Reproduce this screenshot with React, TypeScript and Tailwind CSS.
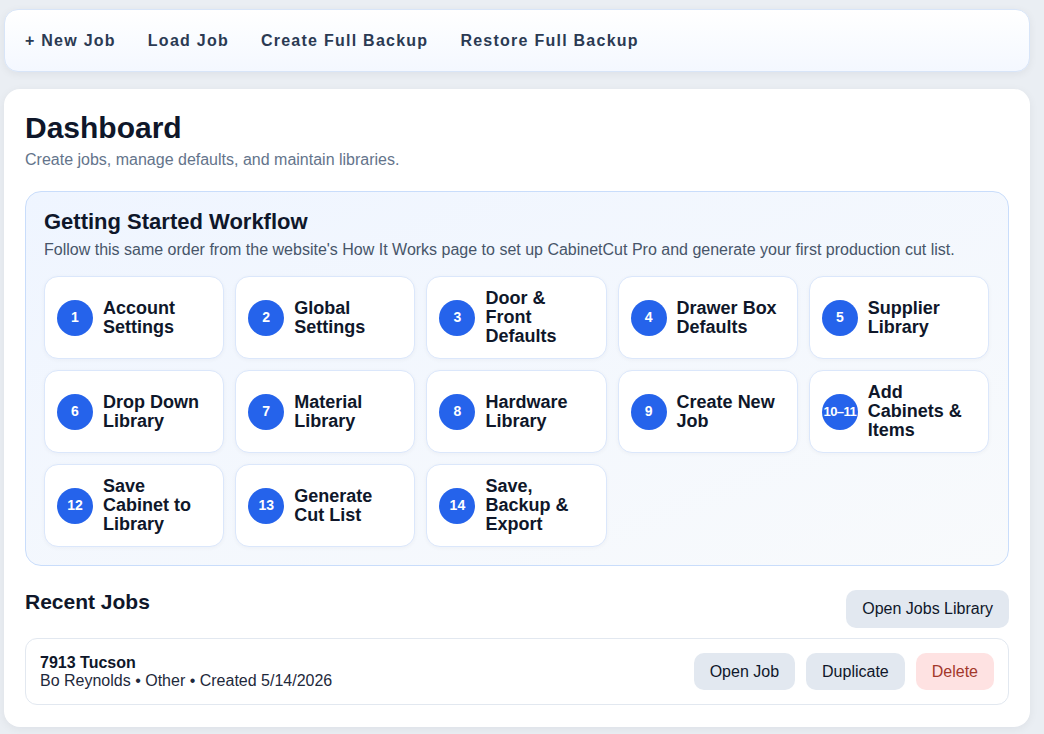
import React from 'react';

const navItems = ['+ New Job', 'Load Job', 'Create Full Backup', 'Restore Full Backup'];

const steps = [
  { n: '1', label: 'Account Settings' },
  { n: '2', label: 'Global Settings' },
  { n: '3', label: 'Door & Front Defaults' },
  { n: '4', label: 'Drawer Box Defaults' },
  { n: '5', label: 'Supplier Library' },
  { n: '6', label: 'Drop Down Library' },
  { n: '7', label: 'Material Library' },
  { n: '8', label: 'Hardware Library' },
  { n: '9', label: 'Create New Job' },
  { n: '10–11', label: 'Add Cabinets & Items' },
  { n: '12', label: 'Save Cabinet to Library' },
  { n: '13', label: 'Generate Cut List' },
  { n: '14', label: 'Save, Backup & Export' },
];

export default function App() {
  return (
    <div className="min-h-[734px] bg-[#eaeef3] pl-[4px] pr-[14px] pt-[9px] pb-[6px] font-['Liberation_Sans',Arial,sans-serif]">
      {/* Top bar */}
      <div className="h-[63px] flex items-center gap-8 pl-[20px] rounded-[14px] border border-[#d8e5f8] bg-gradient-to-b from-white to-[#f4f8ff] shadow-[0_2px_8px_rgba(15,23,42,0.06)]">
        {navItems.map((item) => (
          <span key={item} className="text-base leading-5 font-bold tracking-[1.25px] text-[#2b3a53]">
            {item}
          </span>
        ))}
      </div>

      {/* Main card */}
      <div className="mt-[17px] rounded-[16px] bg-white px-[21px] pt-[21px] pb-[22px] shadow-[0_2px_10px_rgba(15,23,42,0.06)]">
        <h1 className="text-[30px] leading-[36px] font-bold text-[#0f172a]">Dashboard</h1>
        <p className="mt-[4px] text-base leading-5 text-[#64748b]">
          Create jobs, manage defaults, and maintain libraries.
        </p>

        {/* Workflow */}
        <div className="mt-[21px] rounded-[16px] border border-[#c9ddfb] bg-gradient-to-br from-[#eff5ff] to-[#f8fafc] pl-[18px] pr-[19px] pt-[17px] pb-[18px]">
          <h2 className="text-[22px] leading-[26px] font-bold text-[#0f172a]">Getting Started Workflow</h2>
          <p className="mt-[5px] text-base leading-5 text-[#475569]">
            Follow this same order from the website's How It Works page to set up CabinetCut Pro and generate your first production cut list.
          </p>
          <div className="mt-[16px] grid grid-cols-5 gap-[11px]">
            {steps.map((s) => (
              <div
                key={s.n}
                className="flex items-center gap-[10px] rounded-[14px] border border-[#dbe7fb] bg-white px-[12px] py-[12px] shadow-[0_1px_4px_rgba(15,23,42,0.04)]"
              >
                <div
                  className={
                    s.n.length > 2
                      ? 'w-9 h-9 shrink-0 rounded-full bg-[#2563eb] flex items-center justify-center text-white text-[13px] font-bold tracking-[-0.6px]'
                      : 'w-9 h-9 shrink-0 rounded-full bg-[#2563eb] flex items-center justify-center text-white text-[14px] font-bold'
                  }
                >
                  {s.n}
                </div>
                <div className="text-[18px] leading-[19px] font-bold text-[#0f172a]">{s.label}</div>
              </div>
            ))}
          </div>
        </div>

        {/* Recent jobs */}
        <div className="mt-[24px] flex items-start justify-between">
          <h2 className="text-[21px] leading-6 font-bold text-[#0f172a]">Recent Jobs</h2>
          <button className="h-[38px] px-4 rounded-[10px] bg-[#e2e8f0] text-base text-[#0f172a]">
            Open Jobs Library
          </button>
        </div>

        <div className="mt-[10px] flex items-center justify-between rounded-[12px] border border-[#e2e8f0] px-[14px] py-[14px]">
          <div>
            <div className="text-base leading-[18px] font-bold text-[#0f172a]">7913 Tucson</div>
            <div className="text-base leading-[18px] text-[#1e293b]">Bo Reynolds • Other • Created 5/14/2026</div>
          </div>
          <div className="flex gap-[11px]">
            <button className="h-[37px] px-4 rounded-[10px] bg-[#e2e8f0] text-base text-[#0f172a]">Open Job</button>
            <button className="h-[37px] px-4 rounded-[10px] bg-[#e2e8f0] text-base text-[#0f172a]">Duplicate</button>
            <button className="h-[37px] px-4 rounded-[10px] bg-[#fee2e2] text-base text-[#a3382b]">Delete</button>
          </div>
        </div>
      </div>
    </div>
  );
}
